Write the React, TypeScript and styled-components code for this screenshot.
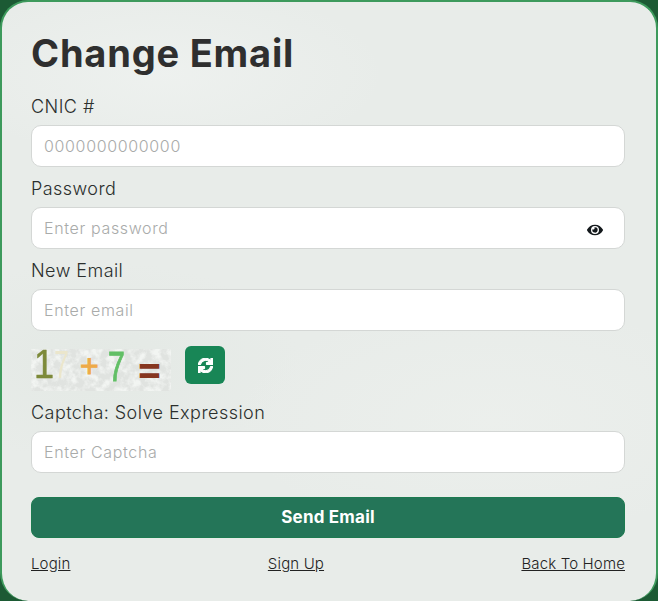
import React from 'react';
import styled, { createGlobalStyle } from 'styled-components';
import { FaEye, FaSync } from 'react-icons/fa';

const GlobalStyle = createGlobalStyle`
  html, body {
    margin: 0;
    padding: 0;
    background: #1c5a34;
  }
  * { box-sizing: border-box; }
`;

const Card = styled.div`
  position: relative;
  width: 658px;
  height: 601px;
  padding: 28px 31px 0 29px;
  background:
    radial-gradient(ellipse 220px 90px at 25% 12%, rgba(240, 243, 241, 0.7) 0, transparent 100%),
    radial-gradient(ellipse 260px 120px at 75% 70%, rgba(238, 241, 238, 0.6) 0, transparent 100%),
    radial-gradient(ellipse 200px 100px at 15% 60%, rgba(226, 232, 227, 0.7) 0, transparent 100%),
    #e8ece9;
  border: 2px solid #3d9a5c;
  border-bottom: 0;
  border-radius: 28px;
  font-family: Inter, "Noto Sans", "Liberation Sans", sans-serif;
  color: #333;
`;

const Title = styled.h1`
  margin: 0;
  height: 46px;
  line-height: 46px;
  font-size: 38px;
  font-weight: 700;
  letter-spacing: 0.8px;
  color: #2f2f2f;
`;

const Label = styled.label<{ $top: number }>`
  display: block;
  height: 21px;
  line-height: 21px;
  font-size: 18px;
  font-weight: 300;
  letter-spacing: 0.45px;
  color: #2b2f2d;
  margin-top: ${(p) => p.$top}px;
  margin-bottom: 8px;
`;

const InputWrap = styled.div`
  position: relative;
  height: 42px;
  background: #fff;
  border: 1px solid #d4d7d5;
  border-radius: 10px;
  display: flex;
  align-items: center;
  padding: 0 12px;
  font-size: 16px;
  font-weight: 300;
  letter-spacing: 0.65px;
`;

const Placeholder = styled.span`
  color: #a9abaa;
`;

const EyeButton = styled.span`
  position: absolute;
  right: 21px;
  top: 14px;
  color: #14191c;
  display: flex;
`;

const CaptchaRow = styled.div`
  display: flex;
  align-items: flex-start;
  gap: 14px;
  margin-top: 15px;
  height: 45px;
`;

const CaptchaImage = styled.div`
  position: relative;
  width: 140px;
  height: 42px;
  margin-top: 3px;
  background: #e0e3e0;
`;

const Noise = styled.svg`
  position: absolute;
  left: 0;
  top: 0;
  width: 140px;
  height: 42px;
`;

const Glyph = styled.span<{
  $left: number;
  $top: number;
  $size: number;
  $color: string;
  $stroke?: number;
  $scale?: number;
}>`
  position: absolute;
  left: ${(p) => p.$left}px;
  top: ${(p) => p.$top}px;
  font-size: ${(p) => p.$size}px;
  line-height: 1;
  font-family: "Liberation Sans", sans-serif;
  color: ${(p) => p.$color};
  -webkit-text-stroke: ${(p) => p.$stroke ?? 0}px ${(p) => p.$color};
  transform: scaleX(${(p) => p.$scale ?? 1});
  transform-origin: left top;
`;

const RefreshButton = styled.button`
  width: 40px;
  height: 38px;
  border: 0;
  border-radius: 6px;
  background: #188656;
  color: #fff;
  display: flex;
  align-items: center;
  justify-content: center;
  padding: 0;
`;

const SubmitButton = styled.button`
  display: block;
  width: 100%;
  height: 41px;
  margin-top: 24px;
  padding: 0 0 2px;
  border: 1px solid #1d7a50;
  border-radius: 8px;
  background: #247558;
  color: #fff;
  font-family: inherit;
  font-size: 17px;
  font-weight: 700;
  letter-spacing: 0.2px;
`;

const Links = styled.div`
  display: flex;
  justify-content: space-between;
  margin-top: 17px;
  font-size: 15px;
  line-height: 18px;
  font-weight: 300;
  letter-spacing: 0.15px;
`;

const LinkText = styled.a`
  color: #222;
  text-decoration: underline;
`;

export default function App() {
  return (
    <>
      <GlobalStyle />
      <Card>
        <Title>Change Email</Title>
        <Label $top={20}>CNIC #</Label>
        <InputWrap><Placeholder>0000000000000</Placeholder></InputWrap>
        <Label $top={11}>Password</Label>
        <InputWrap>
          <Placeholder>Enter password</Placeholder>
          <EyeButton><FaEye size={16} /></EyeButton>
        </InputWrap>
        <Label $top={11}>New Email</Label>
        <InputWrap><Placeholder>Enter email</Placeholder></InputWrap>
        <CaptchaRow>
          <CaptchaImage>
            <Noise viewBox="0 0 140 42">
              <filter id="speckle" colorInterpolationFilters="sRGB" x="0" y="0" width="100%" height="100%">
                <feTurbulence type="fractalNoise" baseFrequency="0.13" numOctaves="4" seed="7" />
                <feColorMatrix values="0 0 0 0 0.95  0 0 0 0 0.96  0 0 0 0 0.95  3 0 0 0 -1.15" />
              </filter>
              <rect width="140" height="42" filter="url(#speckle)" />
            </Noise>
            <Glyph $left={3} $top={-5} $size={40} $color="#7d8a3a" $stroke={0.5} $scale={0.9}>1</Glyph>
            <Glyph $left={23} $top={-3} $size={38} $color="#ebe6cc" $scale={0.7}>7</Glyph>
            <Glyph $left={49} $top={1} $size={32} $color="#eeaa48" $stroke={1}>+</Glyph>
            <Glyph $left={77} $top={-3} $size={42} $color="#62bf66" $stroke={1} $scale={0.72}>7</Glyph>
            <Glyph $left={108} $top={4} $size={36} $color="#85351f" $stroke={2}>=</Glyph>
          </CaptchaImage>
          <RefreshButton><FaSync size={15} stroke="currentColor" strokeWidth={36} /></RefreshButton>
        </CaptchaRow>
        <Label $top={11}>Captcha: Solve Expression</Label>
        <InputWrap><Placeholder>Enter Captcha</Placeholder></InputWrap>
        <SubmitButton>Send Email</SubmitButton>
        <Links>
          <LinkText>Login</LinkText>
          <LinkText>Sign Up</LinkText>
          <LinkText>Back To Home</LinkText>
        </Links>
      </Card>
    </>
  );
}
